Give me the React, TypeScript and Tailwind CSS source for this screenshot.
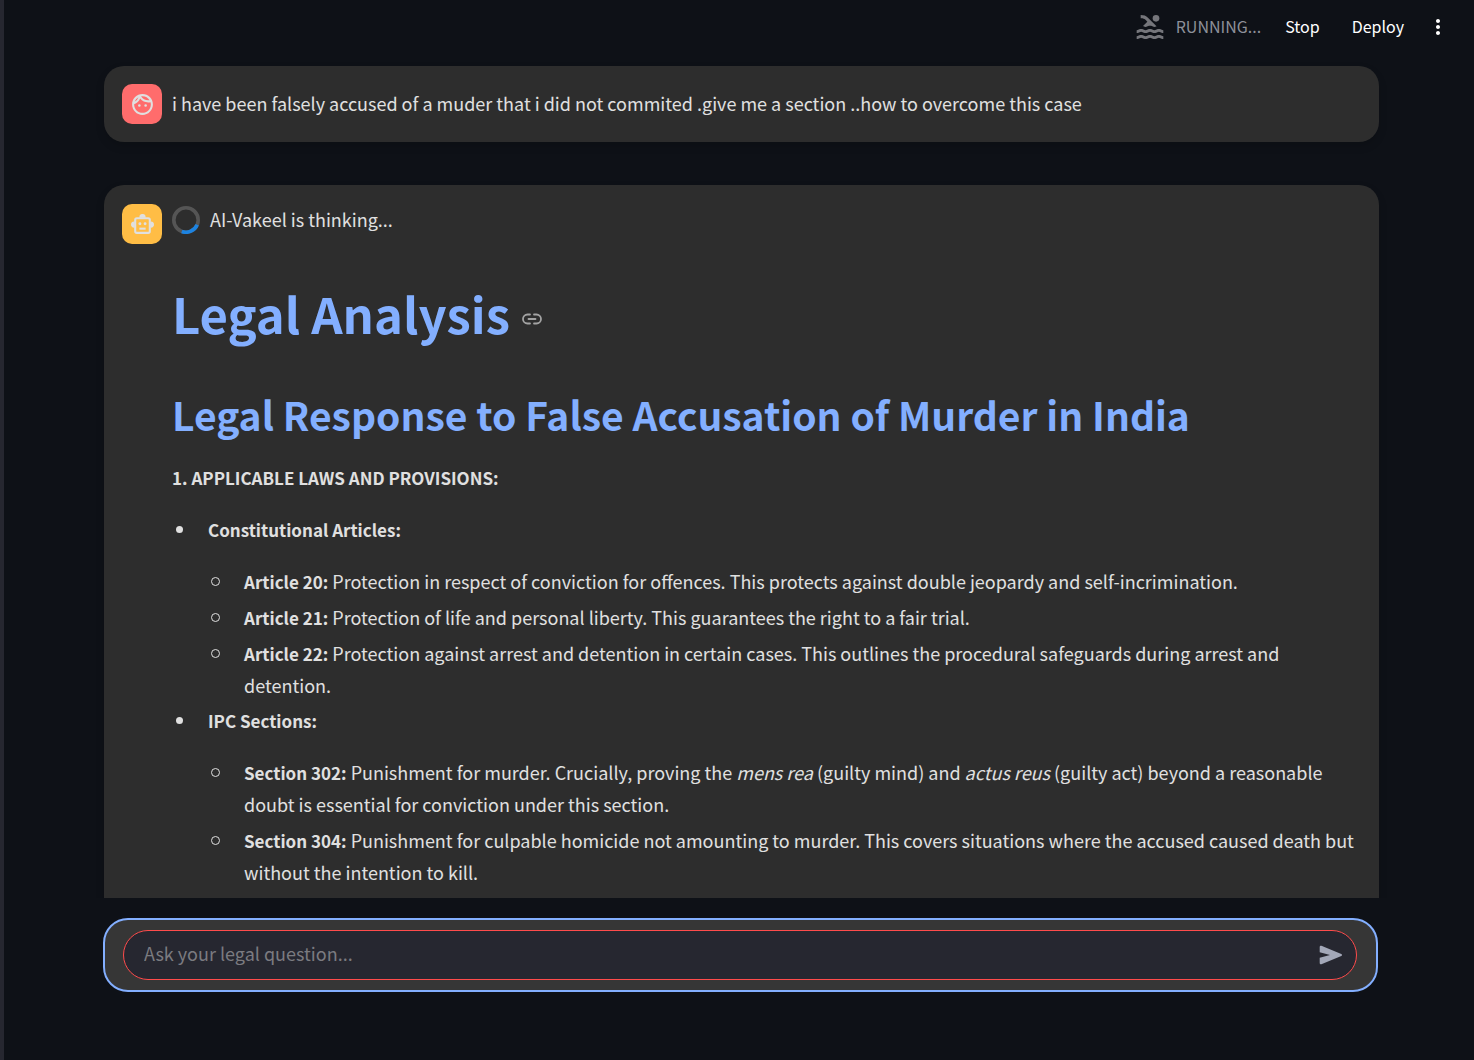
import type { ReactNode } from "react";
import { MdOutlineFace, MdPool, MdMoreVert } from "react-icons/md";

type Point = { label: string; body: ReactNode };
type Topic = { title: string; points: Point[] };

const topics: Topic[] = [
  {
    title: "Constitutional Articles:",
    points: [
      {
        label: "Article 20:",
        body: "Protection in respect of conviction for offences. This protects against double jeopardy and self-incrimination.",
      },
      {
        label: "Article 21:",
        body: "Protection of life and personal liberty. This guarantees the right to a fair trial.",
      },
      {
        label: "Article 22:",
        body: "Protection against arrest and detention in certain cases. This outlines the procedural safeguards during arrest and detention.",
      },
    ],
  },
  {
    title: "IPC Sections:",
    points: [
      {
        label: "Section 302:",
        body: (
          <>
            Punishment for murder. Crucially, proving the <em>mens rea</em> (guilty mind) and <em>actus reus</em>{" "}
            (guilty act) beyond a reasonable doubt is essential for conviction under this section.
          </>
        ),
      },
      {
        label: "Section 304:",
        body: "Punishment for culpable homicide not amounting to murder. This covers situations where the accused caused death but without the intention to kill.",
      },
    ],
  },
];

function Header() {
  return (
    <header className="flex h-[54px] shrink-0 items-center justify-end pr-6 text-[16px] text-white">
      <MdPool className="mr-2.5 size-8 text-[#75767b]" aria-hidden />
      <span className="mr-6 pb-0.5 text-[#8d9099]">RUNNING...</span>
      <button type="button" className="mr-8 pb-0.5">Stop</button>
      <button type="button" className="mr-[22px] pb-0.5">Deploy</button>
      <button type="button" aria-label="Main menu">
        <MdMoreVert className="size-6" aria-hidden />
      </button>
    </header>
  );
}

function Spinner() {
  return (
    <svg viewBox="0 0 28 28" className="size-7 shrink-0" fill="none" strokeWidth="3.6" aria-hidden>
      <circle cx="14" cy="14" r="12.2" stroke="#555555" />
      <path d="M25.2 18.8A12.2 12.2 0 0 1 9.8 25.5" stroke="#1c83e1" />
    </svg>
  );
}

function RobotIcon() {
  return (
    <svg viewBox="0 0 24 24" className="size-[25px]" fill="none" stroke="#e0e0e0" strokeWidth="2" strokeLinejoin="round" aria-hidden>
      <rect x="5" y="6" width="14" height="14" rx="1.5" />
      <path d="M9 16h6" />
      <path d="M9.5 5a2.5 2.5 0 0 1 5 0zM4 9.5a2.5 2.5 0 0 0 0 5zM20 9.5a2.5 2.5 0 0 1 0 5z" fill="#e0e0e0" strokeWidth="1" />
      <circle cx="9.5" cy="11.3" r="1.4" fill="#e0e0e0" stroke="none" />
      <circle cx="14.5" cy="11.3" r="1.4" fill="#e0e0e0" stroke="none" />
    </svg>
  );
}

function LinkIcon() {
  return (
    <svg viewBox="0 0 20 12" className="h-3 w-5" fill="none" stroke="#a3a3a3" strokeWidth="1.8" strokeLinecap="round" aria-hidden>
      <path d="M8 1.5H5.5a4.5 4.5 0 0 0 0 9H8M12 1.5h2.5a4.5 4.5 0 0 1 0 9H12M6.5 6h7" />
    </svg>
  );
}

function Analysis() {
  return (
    <article className="pb-12">
      <h1 className="flex items-center text-[49px] leading-[66px] font-bold text-[#83afff]">
        Legal Analysis
        <a href="#legal-analysis" aria-label="Link to heading" className="mt-3 ml-3">
          <LinkIcon />
        </a>
      </h1>
      <h2 className="mt-[41px] text-[39px] leading-[54px] font-bold text-[#83afff]">
        Legal Response to False Accusation of Murder in India
      </h2>
      <p className="mt-[21px] text-[17px] font-bold">1. APPLICABLE LAWS AND PROVISIONS:</p>
      <ul className="mt-5">
        {topics.map((topic) => (
          <li key={topic.title} className="grid grid-cols-[36px_1fr]">
            <span className="mt-3 ml-1 size-[7px] rounded-full bg-[#e0e0e0]" />
            <div>
              <p className="text-[17px] font-bold">{topic.title}</p>
              <ul className="mt-[19px] mb-px">
                {topic.points.map((point) => (
                  <li key={point.label} className="mb-1 grid grid-cols-[36px_1fr]">
                    <span className="mt-3 ml-[3px] size-[9px] rounded-full border border-[#e0e0e0]" />
                    <p>
                      <strong className="text-[17px] leading-none">{point.label}</strong> {point.body}
                    </p>
                  </li>
                ))}
              </ul>
            </div>
          </li>
        ))}
      </ul>
    </article>
  );
}

function ChatInput() {
  return (
    <form className="mr-24 mb-[68px] ml-[99px] shrink-0 rounded-[25px] border-2 border-[#83afff] bg-[#363636] py-2.5 pr-[19px] pl-[18px]">
      <div className="flex h-[50px] items-center rounded-full border border-[#ff4b4b] bg-[#262730] pr-[13px] pl-5">
        <input
          type="text"
          aria-label="Ask your legal question"
          placeholder="Ask your legal question..."
          className="min-w-0 flex-1 bg-transparent pb-1 text-[#e0e0e0] outline-none placeholder:text-[#7b7b80]"
        />
        <button type="submit" aria-label="Send">
          <svg viewBox="0 0 24 20" className="h-5 w-6" fill="#a3a8b8" aria-hidden>
            <path d="M.7 2C.7 1 1.5.5 2.4.8L22.3 9c1 .4 1 1.5 0 1.9L2.4 19.2c-.9.3-1.7-.2-1.7-1.2V12.7L11 10 .7 7.3z" />
          </svg>
        </button>
      </div>
    </form>
  );
}

export default function App() {
  return (
    <div className="flex h-screen flex-col border-l-4 border-[#262730] bg-[#0e1117] font-['Noto_Sans_CJK_SC',sans-serif] text-[18px] leading-8 text-[#e0e0e0]">
      <Header />
      <main className="min-h-0 flex-1 overflow-hidden pt-3 pr-[95px] pl-[100px]">
        <section className="flex items-center gap-2.5 rounded-[20px] bg-[#2d2d2d] px-[18px] py-[18px] shadow-[0_4px_8px_rgba(0,0,0,0.15)]">
          <div className="flex size-10 shrink-0 items-center justify-center rounded-[10px] bg-[#ff6c6c]">
            <MdOutlineFace className="size-[25px]" aria-hidden />
          </div>
          <p className="pb-0.5">
            i have been falsely accused of a muder that i did not commited .give me a section ..how to overcome this case
          </p>
        </section>
        <section className="mt-[43px] flex items-start gap-2.5 rounded-[20px] bg-[#2d2d2d] px-[18px] pt-[19px] shadow-[0_4px_8px_rgba(0,0,0,0.15)]">
          <div className="flex size-10 shrink-0 items-center justify-center rounded-[10px] bg-[#ffbd45]">
            <RobotIcon />
          </div>
          <div className="min-w-0 flex-1">
            <div className="mb-11 flex h-8 items-center gap-2.5" role="status">
              <Spinner />
              <span className="pb-0.5">AI-Vakeel is thinking...</span>
            </div>
            <Analysis />
          </div>
        </section>
      </main>
      <div className="h-5 shrink-0" />
      <ChatInput />
    </div>
  );
}
